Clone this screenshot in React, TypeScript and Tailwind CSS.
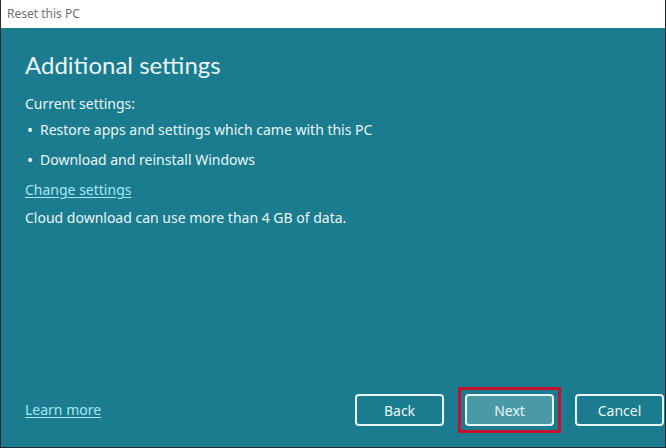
import React from "react";

const font = { fontFamily: '"Segoe UI", "Noto Sans", "Open Sans", sans-serif' };

const Btn = ({ label, focused }: { label: string; focused?: boolean }) => (
  <div className={focused ? "p-[4px] border-[3px] border-[#c8102e] -mx-[7px]" : ""}>
    <button
      className={`w-[89px] h-[32px] rounded-[4px] border-2 border-[#e8f6f8] text-[14px] text-[#eaf7f9] ${
        focused ? "bg-[#4a99a7]" : "bg-transparent"
      }`}
    >
      {label}
    </button>
  </div>
);

export default function App() {
  return (
    <div
      className="w-[666px] h-[448px] flex flex-col border-l border-r border-b border-[#1d2a2e] bg-[#1a7c8e] text-[#e9f6f8]"
      style={font}
    >
      <div className="h-[28px] shrink-0 bg-white flex items-center px-[6px] text-[12px] text-[#707070]">
        Reset this PC
      </div>
      <div className="flex-1 flex flex-col pl-[24px] pr-[1px]">
        <h1 className="mt-[21px] text-[24px] leading-[32px] font-normal font-['Lato',sans-serif]">
          Additional settings
        </h1>
        <p className="mt-[13px] text-[14px] leading-[20px]">Current settings:</p>
        <ul className="mt-[6px] flex flex-col gap-[10px] text-[14px] leading-[20px]">
          <li className="flex items-center">
            <span className="w-[15px] pl-[2px] text-[16px]">•</span>Restore apps and settings which came with this PC
          </li>
          <li className="flex items-center">
            <span className="w-[15px] pl-[2px] text-[16px]">•</span>Download and reinstall Windows
          </li>
        </ul>
        <a className="mt-[10px] text-[14px] leading-[20px] text-[#a8e6f2] underline underline-offset-2 self-start">
          Change settings
        </a>
        <p className="mt-[8px] text-[14px] leading-[20px]">Cloud download can use more than 4 GB of data.</p>
        <div className="mt-auto mb-[14px] flex items-center justify-between">
          <a className="text-[14px] leading-[20px] text-[#a8e6f2] underline underline-offset-2">Learn more</a>
          <div className="flex items-center gap-[21px]">
            <Btn label="Back" />
            <Btn label="Next" focused />
            <Btn label="Cancel" />
          </div>
        </div>
      </div>
    </div>
  );
}
